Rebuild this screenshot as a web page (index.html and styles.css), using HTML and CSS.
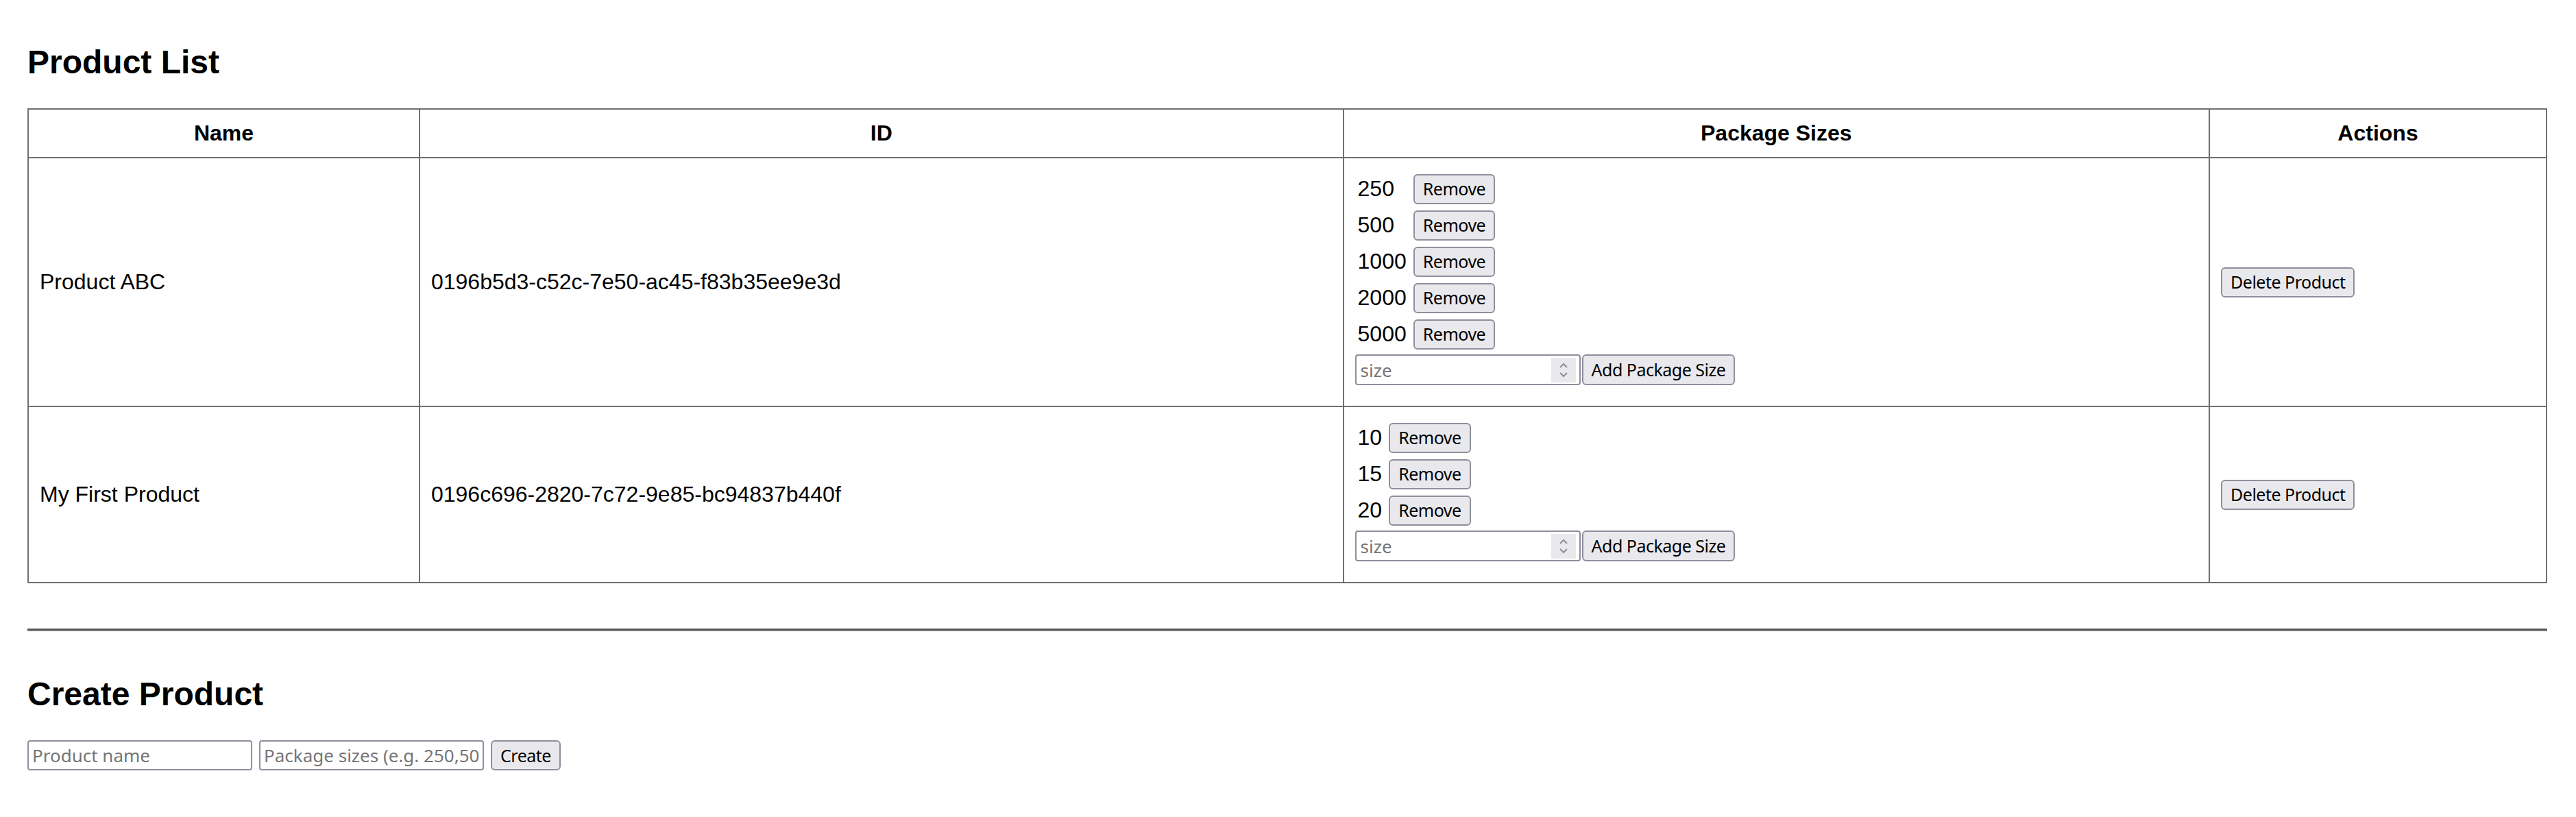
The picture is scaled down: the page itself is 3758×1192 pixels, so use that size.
FILE: index.html
```html
<!DOCTYPE html>
<html>
<head>
    <title>Products</title>
    <link rel="stylesheet" href="styles.css">
</head>
<body>
    <div class="page">
        <h2>Product List</h2>
        <table class="product-table">
            <colgroup>
                <col class="col-name">
                <col class="col-id">
                <col class="col-sizes">
                <col class="col-actions">
            </colgroup>
            <thead>
                <tr>
                    <th>Name</th>
                    <th>ID</th>
                    <th>Package Sizes</th>
                    <th>Actions</th>
                </tr>
            </thead>
            <tbody>
                <tr>
                    <td>Product ABC</td>
                    <td>0196b5d3-c52c-7e50-ac45-f83b35ee9e3d</td>
                    <td>
                        <div class="size-list">
                            <span class="size-value">250</span><button class="btn">Remove</button>
                            <span class="size-value">500</span><button class="btn">Remove</button>
                            <span class="size-value">1000</span><button class="btn">Remove</button>
                            <span class="size-value">2000</span><button class="btn">Remove</button>
                            <span class="size-value">5000</span><button class="btn">Remove</button>
                        </div>
                        <form class="size-form">
                            <div class="number-field">
                                <input type="number" placeholder="size">
                                <span class="spinner">
                                    <svg width="14" height="26" viewBox="0 0 14 26"><path d="M2 9 L7 4 L12 9 M2 17 L7 22 L12 17" fill="none" stroke="#8f8f9d" stroke-width="2"/></svg>
                                </span>
                            </div>
                            <button class="btn" type="button">Add Package Size</button>
                        </form>
                    </td>
                    <td><button class="btn">Delete Product</button></td>
                </tr>
                <tr>
                    <td>My First Product</td>
                    <td>0196c696-2820-7c72-9e85-bc94837b440f</td>
                    <td>
                        <div class="size-list">
                            <span class="size-value">10</span><button class="btn">Remove</button>
                            <span class="size-value">15</span><button class="btn">Remove</button>
                            <span class="size-value">20</span><button class="btn">Remove</button>
                        </div>
                        <form class="size-form">
                            <div class="number-field">
                                <input type="number" placeholder="size">
                                <span class="spinner">
                                    <svg width="14" height="26" viewBox="0 0 14 26"><path d="M2 9 L7 4 L12 9 M2 17 L7 22 L12 17" fill="none" stroke="#8f8f9d" stroke-width="2"/></svg>
                                </span>
                            </div>
                            <button class="btn" type="button">Add Package Size</button>
                        </form>
                    </td>
                    <td><button class="btn">Delete Product</button></td>
                </tr>
            </tbody>
        </table>

        <hr>

        <h2>Create Product</h2>
        <form class="create-form">
            <input class="text-input" type="text" placeholder="Product name">
            <input class="text-input" type="text" placeholder="Package sizes (e.g. 250,500,1000)">
            <button class="btn" type="button">Create</button>
        </form>
    </div>
</body>
</html>
```

FILE: styles.css
```css
body {
    margin: 0;
    background: white;
    color: black;
    font-family: 'Liberation Sans', Arial, sans-serif;
    font-size: 32px;
}

.page {
    padding: 23px 42px 0 40px;
}

h2 {
    font-size: 48px;
    font-weight: bold;
    margin: 40px 0;
}

.product-table {
    width: 100%;
    border-collapse: collapse;
    table-layout: fixed;
}

.col-name { width: 15.54%; }
.col-id { width: 36.68%; }
.col-sizes { width: 34.39%; }
.col-actions { width: 13.39%; }

.product-table th,
.product-table td {
    border: 2px solid #707070;
    padding: 16px;
    text-align: left;
}

.product-table th {
    text-align: center;
    font-weight: bold;
}

.btn {
    font-family: 'Noto Sans', 'Open Sans', sans-serif;
    font-size: 25px;
    letter-spacing: -0.5px;
    color: black;
    background: #e9e9ed;
    border: 2px solid #8f8f9d;
    border-radius: 6px;
    height: 44px;
    padding: 0 12px;
    margin: 0;
    line-height: 1;
}

.size-list {
    display: grid;
    grid-template-columns: auto auto;
    grid-auto-rows: 53px;
    justify-content: start;
    align-items: center;
    column-gap: 10px;
    margin-top: 2px;
}

.size-value {
    padding-left: 4px;
}

.size-form {
    display: flex;
    gap: 2px;
    height: 45px;
    margin: 3px 0 14px;
}

.size-form .btn {
    height: 45px;
}

.number-field {
    display: flex;
    align-items: center;
    box-sizing: border-box;
    width: 329px;
    height: 45px;
    border: 2px solid #8f8f9d;
    border-radius: 4px;
    padding: 0 5px 0 6px;
    background: white;
}

.number-field input {
    flex: 1;
    min-width: 0;
    border: none;
    outline: none;
    padding: 0;
    font-family: 'Noto Sans', 'Open Sans', sans-serif;
    font-size: 26px;
    -moz-appearance: textfield;
}

.number-field input::-webkit-inner-spin-button,
.number-field input::-webkit-outer-spin-button {
    -webkit-appearance: none;
    margin: 0;
}

.spinner {
    display: flex;
    align-items: center;
    justify-content: center;
    width: 36px;
    height: 36px;
    background: #e9e9ed;
}

input::placeholder {
    color: #757575;
}

hr {
    border: none;
    border-top: 3px solid #5c5c5c;
    border-bottom: 1px solid #9a9a9a;
    margin: 66px 0 64px;
}

.create-form {
    display: flex;
    gap: 10px;
}

.text-input {
    box-sizing: border-box;
    width: 328px;
    height: 44px;
    border: 2px solid #8f8f9d;
    border-radius: 4px;
    padding: 0 5px;
    font-family: 'Noto Sans', 'Open Sans', sans-serif;
    font-size: 26px;
    color: black;
}
```
